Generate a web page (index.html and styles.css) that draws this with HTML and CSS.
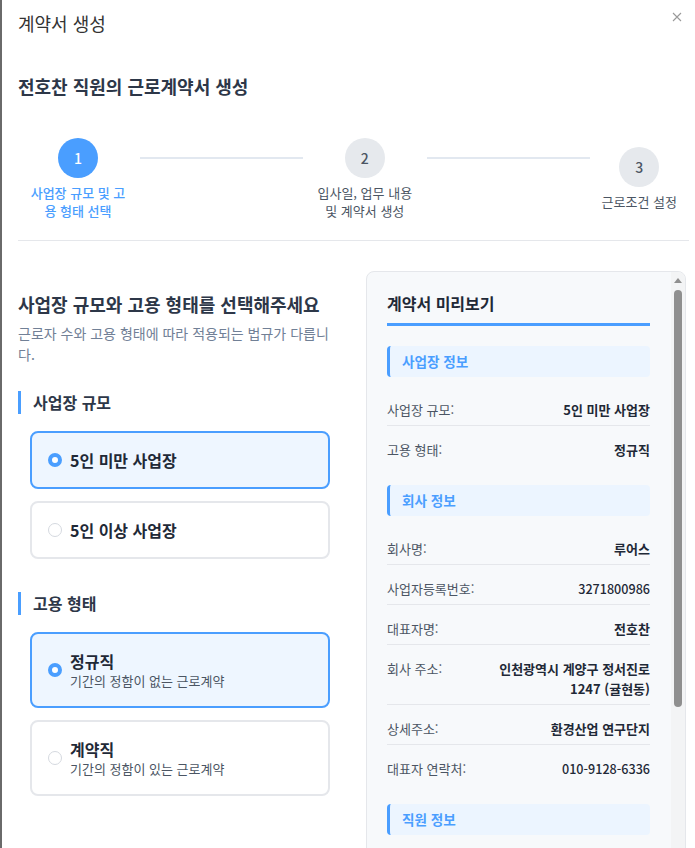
FILE: index.html
```html
<!DOCTYPE html>
<html lang="ko">
<head>
<meta charset="utf-8">
<title>계약서 생성</title>
<link rel="stylesheet" href="styles.css">
</head>
<body>
<div class="page">
  <div class="strip"></div>
  <div class="modal">
    <header class="modal-header">
      <h1 class="modal-title">계약서 생성</h1>
      <button class="close" aria-label="닫기">
        <svg width="10" height="10" viewBox="0 0 10 10"><path d="M1 1L9 9M9 1L1 9" stroke="#9a9a9a" stroke-width="1.1" fill="none"/></svg>
      </button>
    </header>
    <div class="modal-body">
      <h2 class="title">전호찬 직원의 근로계약서 생성</h2>
      <ol class="stepper">
        <li class="step active"><span class="circle">1</span><span class="step-label">사업장 규모 및 고용 형태 선택</span></li>
        <li class="step-line"></li>
        <li class="step"><span class="circle">2</span><span class="step-label">입사일, 업무 내용 및 계약서 생성</span></li>
        <li class="step-line"></li>
        <li class="step"><span class="circle">3</span><span class="step-label">근로조건 설정</span></li>
      </ol>
      <div class="content">
        <section class="left">
          <h3 class="heading">사업장 규모와 고용 형태를 선택해주세요</h3>
          <p class="desc">근로자 수와 고용 형태에 따라 적용되는 법규가 다릅니다.</p>

          <h4 class="group-title">사업장 규모</h4>
          <div class="options">
            <label class="option selected"><span class="radio"></span><span class="opt-text"><span class="opt-title">5인 미만 사업장</span></span></label>
            <label class="option"><span class="radio"></span><span class="opt-text"><span class="opt-title">5인 이상 사업장</span></span></label>
          </div>

          <h4 class="group-title second">고용 형태</h4>
          <div class="options">
            <label class="option selected"><span class="radio"></span><span class="opt-text"><span class="opt-title">정규직</span><span class="opt-desc">기간의 정함이 없는 근로계약</span></span></label>
            <label class="option"><span class="radio"></span><span class="opt-text"><span class="opt-title">계약직</span><span class="opt-desc">기간의 정함이 있는 근로계약</span></span></label>
          </div>
        </section>

        <aside class="preview">
          <div class="preview-inner">
            <h3 class="preview-title">계약서 미리보기</h3>

            <div class="pv-section">
              <div class="pv-head">사업장 정보</div>
              <div class="pv-rows">
                <div class="pv-row"><span class="pv-label">사업장 규모:</span><span class="pv-value">5인 미만 사업장</span></div>
                <div class="pv-row"><span class="pv-label">고용 형태:</span><span class="pv-value">정규직</span></div>
              </div>
            </div>

            <div class="pv-section">
              <div class="pv-head">회사 정보</div>
              <div class="pv-rows">
                <div class="pv-row"><span class="pv-label">회사명:</span><span class="pv-value">루어스</span></div>
                <div class="pv-row"><span class="pv-label">사업자등록번호:</span><span class="pv-value num">3271800986</span></div>
                <div class="pv-row"><span class="pv-label">대표자명:</span><span class="pv-value">전호찬</span></div>
                <div class="pv-row"><span class="pv-label">회사 주소:</span><span class="pv-value">인천광역시 계양구 정서진로 1247 (귤현동)</span></div>
                <div class="pv-row"><span class="pv-label">상세주소:</span><span class="pv-value">환경산업 연구단지</span></div>
                <div class="pv-row"><span class="pv-label">대표자 연락처:</span><span class="pv-value num">010-9128-6336</span></div>
              </div>
            </div>

            <div class="pv-section">
              <div class="pv-head">직원 정보</div>
            </div>
          </div>
          <div class="scrollbar">
            <span class="sb-arrow"></span>
            <span class="sb-thumb"></span>
          </div>
        </aside>
      </div>
    </div>
  </div>
</div>
</body>
</html>
```

FILE: styles.css
```css
* { box-sizing: border-box; }

html, body {
  margin: 0;
  padding: 0;
  background: #ffffff;
  font-family: "Noto Sans CJK KR", "Noto Sans", sans-serif;
  color: #2d3748;
}

.page {
  display: flex;
  width: 695px;
  height: 848px;
  overflow: hidden;
}

.strip {
  width: 2px;
  flex-shrink: 0;
  background: #6a6a6a;
}

.modal {
  flex: 1;
  background: #ffffff;
  min-width: 0;
}

.modal-header {
  display: flex;
  justify-content: space-between;
  align-items: flex-start;
  padding: 12px 13px 12px 16px;
}

.modal-title {
  margin: 0;
  font-size: 18px;
  line-height: 22px;
  font-weight: 400;
  color: #333333;
}

.close {
  border: 0;
  background: none;
  padding: 0;
  margin-top: 0;
  width: 10px;
  height: 10px;
  display: flex;
}

.modal-body {
  padding: 28px 6px 0 16px;
}

.title {
  margin: 0;
  font-size: 18px;
  line-height: 24px;
  font-weight: 700;
  color: #2d3748;
}

.stepper {
  list-style: none;
  margin: 40px 0 0;
  padding: 0 12px 20px 10px;
  display: flex;
  align-items: center;
  border-bottom: 1px solid #e5e7eb;
}

.step {
  display: flex;
  flex-direction: column;
  align-items: center;
  max-width: 100px;
  flex-shrink: 0;
}

.circle {
  width: 40px;
  height: 40px;
  border-radius: 50%;
  background: #e6e9ed;
  color: #4b5563;
  display: flex;
  align-items: center;
  justify-content: center;
  font-size: 14px;
  font-weight: 500;
}

.step.active .circle {
  background: #4a9eff;
  color: #ffffff;
}

.step-label {
  margin-top: 6px;
  font-size: 13px;
  line-height: 18px;
  text-align: center;
  color: #4b5563;
}

.step.active .step-label {
  color: #4a9eff;
  font-weight: 500;
}

.step-line {
  flex: 1;
  height: 2px;
  background: #e2e8f0;
  margin: 0 12px;
  align-self: flex-start;
  margin-top: 19px;
}

.content {
  display: grid;
  grid-template-columns: 312px 320px;
  column-gap: 36px;
  align-items: start;
  margin-top: 30px;
}

.left {
  padding-top: 21px;
}

.heading {
  margin: 0;
  font-size: 18px;
  line-height: 24px;
  font-weight: 700;
  color: #2d3748;
}

.desc {
  margin: 7px 0 0;
  font-size: 14px;
  line-height: 21px;
  color: #718096;
}

.group-title {
  margin: 26px 0 0;
  border-left: 3px solid #4a9eff;
  padding-left: 12px;
  font-size: 16px;
  line-height: 23px;
  font-weight: 700;
  color: #2d3748;
}

.group-title.second {
  margin-top: 33px;
}

.options {
  margin: 17px 0 0 12px;
  display: flex;
  flex-direction: column;
  gap: 12px;
}

.option {
  display: flex;
  align-items: center;
  gap: 8px;
  border: 2px solid #e5e7eb;
  border-radius: 8px;
  padding: 16px 16px;
  background: #ffffff;
}

.option.selected {
  border-color: #4a9eff;
  background: #eef6ff;
}

.radio {
  width: 14px;
  height: 14px;
  border-radius: 50%;
  border: 1px solid #d5d9df;
  background: #ffffff;
  flex-shrink: 0;
}

.option.selected .radio {
  border: 4px solid #4a9eff;
}

.opt-text {
  display: flex;
  flex-direction: column;
}

.opt-title {
  font-size: 16px;
  line-height: 22px;
  font-weight: 700;
  color: #1f2937;
}

.opt-desc {
  font-size: 13px;
  line-height: 18px;
  color: #4b5563;
}

.preview {
  position: relative;
  height: 620px;
  overflow: hidden;
  background: #f7f9fb;
  border: 1px solid #e5e7eb;
  border-radius: 8px;
}

.preview-inner {
  padding: 20px 35px 20px 20px;
}

.preview-title {
  margin: 0;
  font-size: 16px;
  line-height: 22px;
  font-weight: 700;
  color: #1f2937;
  padding-bottom: 9px;
  border-bottom: 3px solid #4a9eff;
}

.pv-section {
  margin-top: 20px;
}

.pv-head {
  background: #ecf5ff;
  border-left: 3px solid #4a9eff;
  border-radius: 4px;
  padding: 6px 12px;
  font-size: 13.6px;
  line-height: 19px;
  font-weight: 700;
  color: #4a9eff;
}

.pv-rows {
  margin-top: 9px;
}

.pv-row {
  display: flex;
  justify-content: space-between;
  align-items: flex-start;
  gap: 12px;
  padding: 14px 0 5px;
  border-bottom: 1px solid #e5e7eb;
  line-height: 20px;
}

.pv-row:last-child {
  border-bottom: 0;
}

.pv-label {
  flex-shrink: 0;
  font-size: 13px;
  color: #4b5563;
}

.pv-value {
  max-width: 60%;
  text-align: right;
  font-size: 13px;
  font-weight: 700;
  color: #1f2937;
}

.pv-value.num {
  font-weight: 500;
  font-size: 12.6px;
}

.scrollbar {
  position: absolute;
  top: 0;
  right: 0;
  width: 14px;
  bottom: 0;
  background: #f3f4f5;
}

.sb-arrow {
  position: absolute;
  top: 6px;
  left: 3px;
  width: 0;
  height: 0;
  border-left: 4px solid transparent;
  border-right: 4px solid transparent;
  border-bottom: 5px solid #8f8f8f;
}

.sb-thumb {
  position: absolute;
  top: 18px;
  left: 3px;
  width: 8px;
  height: 417px;
  border-radius: 4px;
  background: #8f8f8f;
}
```
